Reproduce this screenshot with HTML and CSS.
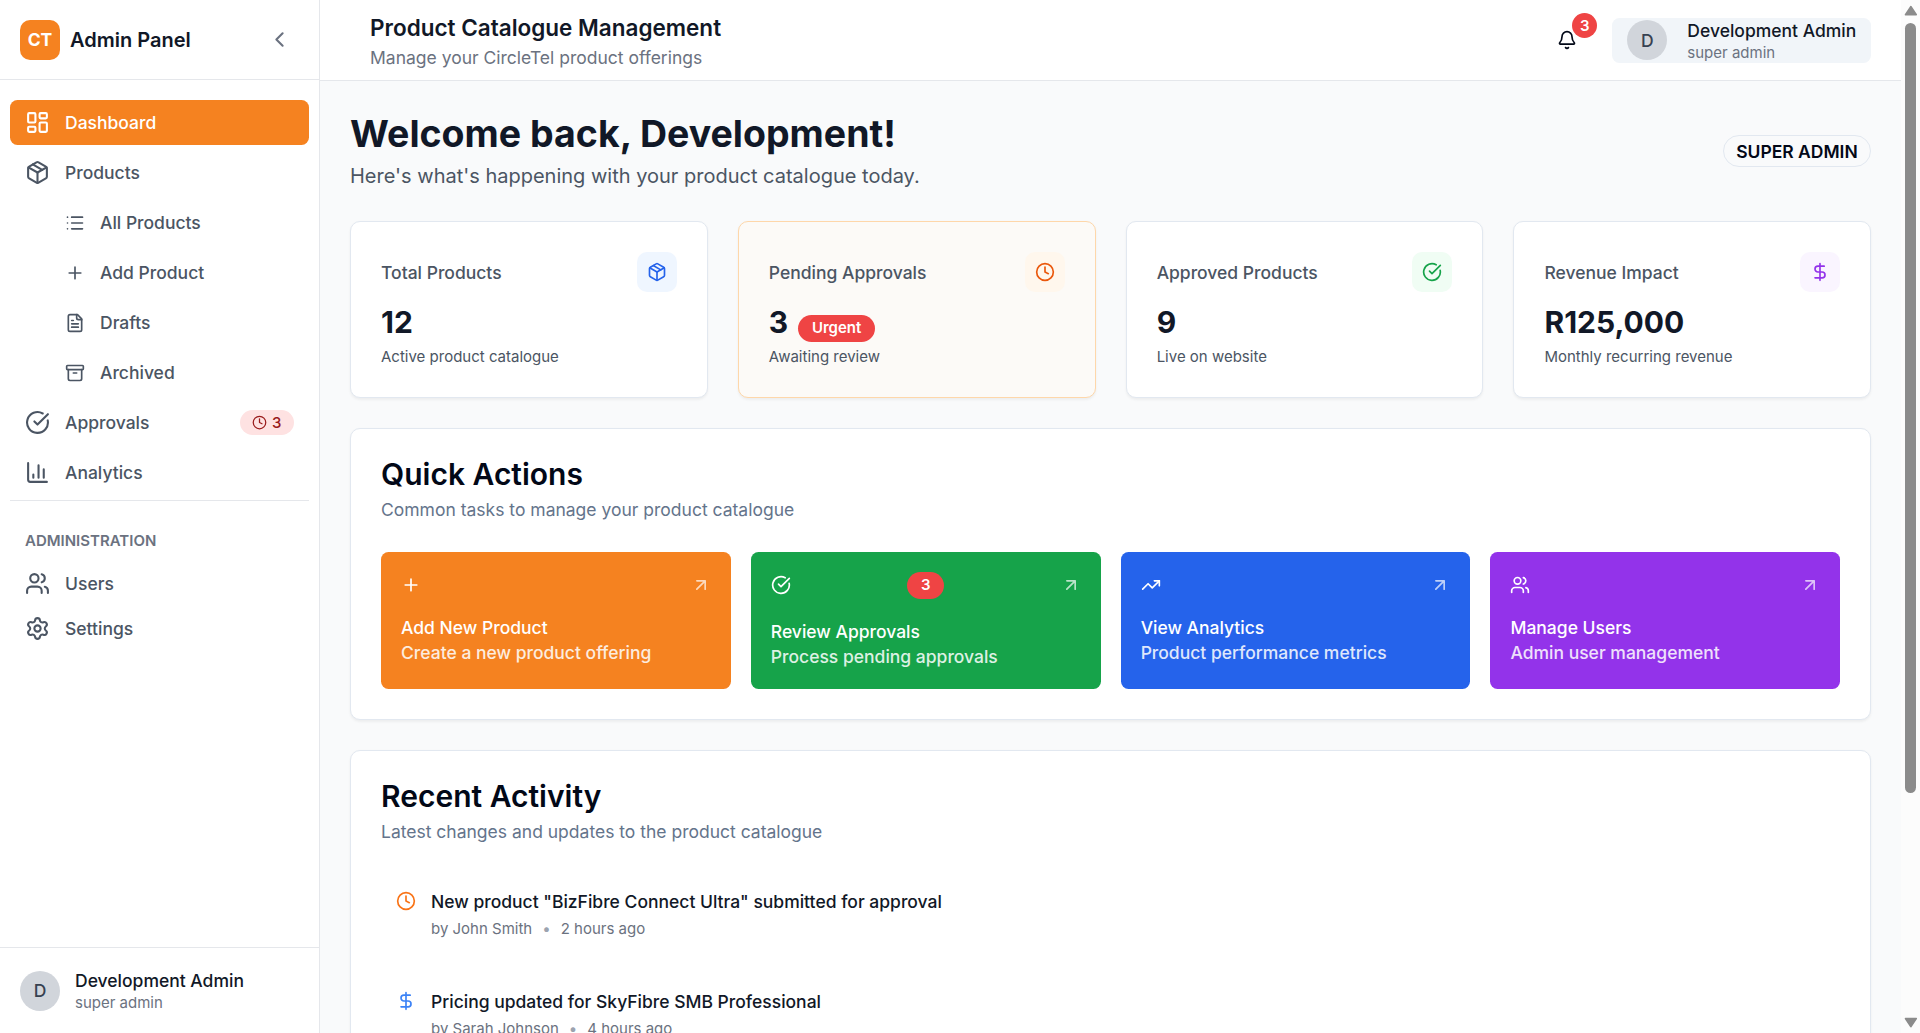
FILE: index.html
```html
<!DOCTYPE html>
<html lang="en">
<head>
<meta charset="utf-8">
<meta name="viewport" content="width=device-width, initial-scale=1">
<title>Product Catalogue Management</title>
<link rel="stylesheet" href="styles.css">
</head>
<body>
<svg class="sprite" aria-hidden="true">
  <symbol id="i-dashboard" viewBox="0 0 24 24"><rect x="3" y="3" width="7" height="9" rx="1"/><rect x="14" y="3" width="7" height="5" rx="1"/><rect x="14" y="12" width="7" height="9" rx="1"/><rect x="3" y="16" width="7" height="5" rx="1"/></symbol>
  <symbol id="i-package" viewBox="0 0 24 24"><path d="M11 21.73a2 2 0 0 0 2 0l7-4A2 2 0 0 0 21 16V8a2 2 0 0 0-1-1.73l-7-4a2 2 0 0 0-2 0l-7 4A2 2 0 0 0 3 8v8a2 2 0 0 0 1 1.73z"/><path d="M12 22V12"/><path d="M3.29 7 12 12l8.71-5"/><path d="m7.5 4.27 9 5.15"/></symbol>
  <symbol id="i-list" viewBox="0 0 24 24"><path d="M3 5h.01M3 12h.01M3 19h.01M8 5h13M8 12h13M8 19h13"/></symbol>
  <symbol id="i-plus" viewBox="0 0 24 24"><path d="M5 12h14M12 5v14"/></symbol>
  <symbol id="i-file" viewBox="0 0 24 24"><path d="M15 2H6a2 2 0 0 0-2 2v16a2 2 0 0 0 2 2h12a2 2 0 0 0 2-2V7z"/><path d="M14 2v4a2 2 0 0 0 2 2h4"/><path d="M10 9H8M16 13H8M16 17H8"/></symbol>
  <symbol id="i-archive" viewBox="0 0 24 24"><rect x="2" y="3" width="20" height="5" rx="1"/><path d="M4 8v11a2 2 0 0 0 2 2h12a2 2 0 0 0 2-2V8"/><path d="M10 12h4"/></symbol>
  <symbol id="i-check" viewBox="0 0 24 24"><path d="M21.801 10A10 10 0 1 1 17 3.335"/><path d="m9 11 3 3L22 4"/></symbol>
  <symbol id="i-chart" viewBox="0 0 24 24"><path d="M3 3v16a2 2 0 0 0 2 2h16"/><path d="M18 17V9M13 17V5M8 17v-3"/></symbol>
  <symbol id="i-users" viewBox="0 0 24 24"><path d="M16 21v-2a4 4 0 0 0-4-4H6a4 4 0 0 0-4 4v2"/><path d="M16 3.128a4 4 0 0 1 0 7.744"/><path d="M22 21v-2a4 4 0 0 0-3-3.87"/><circle cx="9" cy="7" r="4"/></symbol>
  <symbol id="i-settings" viewBox="0 0 24 24"><path d="M9.671 4.136a2.34 2.34 0 0 1 4.659 0 2.34 2.34 0 0 0 3.319 1.915 2.34 2.34 0 0 1 2.33 4.033 2.34 2.34 0 0 0 0 3.831 2.34 2.34 0 0 1-2.33 4.033 2.34 2.34 0 0 0-3.319 1.915 2.34 2.34 0 0 1-4.659 0 2.34 2.34 0 0 0-3.32-1.915 2.34 2.34 0 0 1-2.33-4.033 2.34 2.34 0 0 0 0-3.831A2.34 2.34 0 0 1 6.35 6.051a2.34 2.34 0 0 0 3.319-1.915"/><circle cx="12" cy="12" r="3"/></symbol>
  <symbol id="i-chevron" viewBox="0 0 24 24"><path d="m15 18-6-6 6-6"/></symbol>
  <symbol id="i-clock" viewBox="0 0 24 24"><circle cx="12" cy="12" r="10"/><path d="M12 6v6l4 2"/></symbol>
  <symbol id="i-bell" viewBox="0 0 24 24"><path d="M10.268 21a2 2 0 0 0 3.464 0"/><path d="M3.262 15.326A1 1 0 0 0 4 17h16a1 1 0 0 0 .74-1.673C19.41 13.956 18 12.499 18 8A6 6 0 0 0 6 8c0 4.499-1.411 5.956-2.738 7.326"/></symbol>
  <symbol id="i-dollar" viewBox="0 0 24 24"><path d="M12 2v20"/><path d="M17 5H9.5a3.5 3.5 0 0 0 0 7h5a3.5 3.5 0 0 1 0 7H6"/></symbol>
  <symbol id="i-trend" viewBox="0 0 24 24"><path d="M16 7h6v6"/><path d="m22 7-8.5 8.5-5-5L2 17"/></symbol>
  <symbol id="i-arrow" viewBox="0 0 24 24"><path d="M7 7h10v10M7 17 17 7"/></symbol>
</svg>

<aside class="sidebar">
  <div class="brand">
    <span class="brand-mark">CT</span>
    <span class="brand-name">Admin Panel</span>
    <button class="collapse" type="button" aria-label="Collapse sidebar"><svg class="icon icon-lg"><use href="#i-chevron"/></svg></button>
  </div>
  <nav class="nav" aria-label="Main">
    <a class="nav-item active" href="#" aria-current="page"><svg class="icon icon-lg"><use href="#i-dashboard"/></svg>Dashboard</a>
    <a class="nav-item" href="#"><svg class="icon icon-lg"><use href="#i-package"/></svg>Products</a>
    <a class="nav-item sub" href="#"><svg class="icon"><use href="#i-list"/></svg>All Products</a>
    <a class="nav-item sub" href="#"><svg class="icon"><use href="#i-plus"/></svg>Add Product</a>
    <a class="nav-item sub" href="#"><svg class="icon"><use href="#i-file"/></svg>Drafts</a>
    <a class="nav-item sub" href="#"><svg class="icon"><use href="#i-archive"/></svg>Archived</a>
    <a class="nav-item" href="#"><svg class="icon icon-lg"><use href="#i-check"/></svg>Approvals
      <span class="nav-badge"><svg class="icon icon-sm"><use href="#i-clock"/></svg>3</span></a>
    <a class="nav-item" href="#"><svg class="icon icon-lg"><use href="#i-chart"/></svg>Analytics</a>
    <div class="nav-group">
      <h2 class="nav-label">ADMINISTRATION</h2>
      <a class="nav-item" href="#"><svg class="icon icon-lg"><use href="#i-users"/></svg>Users</a>
      <a class="nav-item" href="#"><svg class="icon icon-lg"><use href="#i-settings"/></svg>Settings</a>
    </div>
  </nav>
  <div class="account">
    <span class="avatar">D</span>
    <span class="person"><span class="person-name">Development Admin</span><span class="person-role">super admin</span></span>
  </div>
</aside>

<div class="page">
  <header class="topbar">
    <div class="topbar-title">
      <h1 class="page-title">Product Catalogue Management</h1>
      <p class="page-note">Manage your CircleTel product offerings</p>
    </div>
    <div class="topbar-actions">
      <button class="bell" type="button" aria-label="Notifications"><svg class="icon"><use href="#i-bell"/></svg><span class="bell-count">3</span></button>
      <button class="profile" type="button">
        <span class="avatar">D</span>
        <span class="person"><span class="person-name">Development Admin</span><span class="person-role">super admin</span></span>
      </button>
    </div>
  </header>

  <main class="content">
    <div class="welcome">
      <div class="welcome-text">
        <h2 class="welcome-title">Welcome back, Development!</h2>
        <p class="welcome-note">Here's what's happening with your product catalogue today.</p>
      </div>
      <span class="role-badge">SUPER ADMIN</span>
    </div>

    <section class="stats" aria-label="Statistics">
      <article class="card">
        <div class="stat-head"><h3 class="stat-title">Total Products</h3><span class="chip blue"><svg class="icon"><use href="#i-package"/></svg></span></div>
        <div class="stat-value">12</div>
        <p class="stat-note">Active product catalogue</p>
      </article>
      <article class="card urgent">
        <div class="stat-head"><h3 class="stat-title">Pending Approvals</h3><span class="chip orange"><svg class="icon"><use href="#i-clock"/></svg></span></div>
        <div class="stat-value">3<span class="badge">Urgent</span></div>
        <p class="stat-note">Awaiting review</p>
      </article>
      <article class="card">
        <div class="stat-head"><h3 class="stat-title">Approved Products</h3><span class="chip green"><svg class="icon"><use href="#i-check"/></svg></span></div>
        <div class="stat-value">9</div>
        <p class="stat-note">Live on website</p>
      </article>
      <article class="card">
        <div class="stat-head"><h3 class="stat-title">Revenue Impact</h3><span class="chip purple"><svg class="icon"><use href="#i-dollar"/></svg></span></div>
        <div class="stat-value">R125,000</div>
        <p class="stat-note">Monthly recurring revenue</p>
      </article>
    </section>

    <section class="card">
      <h2 class="card-title">Quick Actions</h2>
      <p class="card-note">Common tasks to manage your product catalogue</p>
      <div class="actions">
        <button class="action action-orange" type="button">
          <span class="action-top"><svg class="icon"><use href="#i-plus"/></svg><svg class="icon faded"><use href="#i-arrow"/></svg></span>
          <span class="action-text"><span>Add New Product</span><span class="action-note">Create a new product offering</span></span>
        </button>
        <button class="action action-green" type="button">
          <span class="action-top"><svg class="icon"><use href="#i-check"/></svg><span class="badge">3</span><svg class="icon faded"><use href="#i-arrow"/></svg></span>
          <span class="action-text"><span>Review Approvals</span><span class="action-note">Process pending approvals</span></span>
        </button>
        <button class="action action-blue" type="button">
          <span class="action-top"><svg class="icon"><use href="#i-trend"/></svg><svg class="icon faded"><use href="#i-arrow"/></svg></span>
          <span class="action-text"><span>View Analytics</span><span class="action-note">Product performance metrics</span></span>
        </button>
        <button class="action action-purple" type="button">
          <span class="action-top"><svg class="icon"><use href="#i-users"/></svg><svg class="icon faded"><use href="#i-arrow"/></svg></span>
          <span class="action-text"><span>Manage Users</span><span class="action-note">Admin user management</span></span>
        </button>
      </div>
    </section>

    <section class="card">
      <h2 class="card-title">Recent Activity</h2>
      <p class="card-note">Latest changes and updates to the product catalogue</p>
      <ul class="feed">
        <li class="feed-item">
          <svg class="icon tone-orange"><use href="#i-clock"/></svg>
          <div class="feed-text">
            <p class="feed-title">New product "BizFibre Connect Ultra" submitted for approval</p>
            <p class="feed-meta"><span>by John Smith</span><span class="dot">•</span><span>2 hours ago</span></p>
          </div>
        </li>
        <li class="feed-item">
          <svg class="icon tone-blue"><use href="#i-dollar"/></svg>
          <div class="feed-text">
            <p class="feed-title">Pricing updated for SkyFibre SMB Professional</p>
            <p class="feed-meta"><span>by Sarah Johnson</span><span class="dot">•</span><span>4 hours ago</span></p>
          </div>
        </li>
      </ul>
    </section>
  </main>
</div>

<div class="scrollbar" aria-hidden="true">
  <svg class="scroll-arrow" viewBox="0 0 10 8"><path d="M5 1 9 7H1z"/></svg>
  <div class="scroll-track"><div class="scroll-thumb"></div></div>
  <svg class="scroll-arrow" viewBox="0 0 10 8"><path d="M5 7 1 1h8z"/></svg>
</div>
</body>
</html>
```
FILE: styles.css
```css
*,
*::before,
*::after {
  box-sizing: border-box;
}

/* The interface is shown at 125% scale. */
html {
  height: 100%;
  zoom: 1.25;
}

body {
  display: flex;
  height: 100%;
  margin: 0;
  overflow: hidden;
  background: #f9fafb;
  color: #020817;
  font-family: Inter, "Liberation Sans", sans-serif;
  font-size: 14px;
  line-height: 20px;
}

h1, h2, h3, p, ul {
  margin: 0;
  padding: 0;
}

button {
  border: 0;
  margin: 0;
  padding: 0;
  background: none;
  color: inherit;
  font: inherit;
  text-align: left;
  cursor: pointer;
}

.sprite {
  position: absolute;
  width: 0;
  height: 0;
}

.icon {
  flex: none;
  display: block;
  width: 16px;
  height: 16px;
  fill: none;
  stroke: currentColor;
  stroke-width: 2;
  stroke-linecap: round;
  stroke-linejoin: round;
}

.icon-lg {
  width: 20px;
  height: 20px;
}

.icon-sm {
  width: 12px;
  height: 12px;
}

/* Sidebar */
.sidebar {
  flex: none;
  display: flex;
  flex-direction: column;
  width: 256px;
  border-right: 1px solid #e5e7eb;
  background: #fff;
}

.brand {
  display: flex;
  align-items: center;
  gap: 8px;
  height: 64px;
  padding: 0 16px;
  border-bottom: 1px solid #e5e7eb;
}

.brand-mark {
  display: grid;
  place-items: center;
  width: 32px;
  height: 32px;
  border-radius: 8px;
  background: #f58220;
  color: #fff;
  font-weight: 700;
}

.brand-name {
  flex: 1;
  color: #111827;
  font-size: 16px;
  line-height: 24px;
  font-weight: 600;
}

.collapse {
  padding: 6px;
  color: #6b7280;
}

.nav {
  flex: 1;
  display: flex;
  flex-direction: column;
  gap: 4px;
  padding: 16px 8px;
}

.nav-item {
  display: flex;
  align-items: center;
  gap: 12px;
  padding: 8px 12px;
  border-radius: 6px;
  color: #4b5563;
  font-weight: 500;
  text-decoration: none;
}

.nav-item.active {
  background: #f58220;
  color: #fff;
}

.nav-item.sub {
  margin-left: 32px;
}

.nav-badge {
  display: flex;
  align-items: center;
  gap: 4px;
  margin-left: auto;
  padding: 2px 10px;
  border-radius: 10px;
  background: #fee2e2;
  color: #991b1b;
  font-size: 12px;
  line-height: 16px;
}

.nav-group {
  padding-top: 24px;
  border-top: 1px solid #e5e7eb;
}

.nav-label {
  padding: 0 12px 8px;
  color: #6b7280;
  font-size: 12px;
  line-height: 16px;
  font-weight: 600;
}

.account {
  display: flex;
  align-items: center;
  gap: 12px;
  padding: 16px;
  border-top: 1px solid #e5e7eb;
}

.avatar {
  flex: none;
  display: grid;
  place-items: center;
  width: 32px;
  height: 32px;
  border-radius: 50%;
  background: #d1d5db;
  color: #374151;
  font-weight: 500;
}

.person {
  display: flex;
  flex-direction: column;
}

.person-name {
  color: #111827;
  font-weight: 500;
}

.person-role {
  color: #6b7280;
  font-size: 12px;
  line-height: 16px;
}

/* Top bar */
.page {
  flex: 1;
  min-width: 0;
  display: flex;
  flex-direction: column;
}

.topbar {
  flex: none;
  display: flex;
  align-items: center;
  justify-content: space-between;
  padding: 8px 24px 8px 40px;
  border-bottom: 1px solid #e5e7eb;
  background: #fff;
}

.page-title {
  color: #111827;
  font-size: 18px;
  line-height: 28px;
  font-weight: 600;
}

.page-note {
  color: #6b7280;
}

.topbar-actions {
  display: flex;
  align-items: center;
  gap: 16px;
}

.bell {
  position: relative;
  padding: 10px 12px;
}

.bell-count {
  position: absolute;
  top: -4px;
  right: -4px;
  width: 20px;
  height: 20px;
  border-radius: 50%;
  background: #ef4444;
  color: #fff;
  font-size: 12px;
  line-height: 20px;
  font-weight: 600;
  text-align: center;
}

.profile {
  display: flex;
  align-items: center;
  gap: 16px;
  padding: 0 12px;
  border-radius: 6px;
  background: #f1f5f9;
}

/* Content */
.content {
  display: flex;
  flex-direction: column;
  gap: 24px;
  padding: 24px;
}

.welcome {
  display: flex;
  align-items: center;
  justify-content: space-between;
}

.welcome-title {
  color: #111827;
  font-size: 30px;
  line-height: 36px;
  font-weight: 700;
}

.welcome-note {
  margin-top: 4px;
  color: #4b5563;
  font-size: 16px;
  line-height: 24px;
}

.role-badge {
  padding: 2px 10px;
  border: 1px solid #e2e8f0;
  border-radius: 13px;
  font-weight: 600;
}

.card {
  padding: 24px;
  border: 1px solid #e2e8f0;
  border-radius: 8px;
  background: #fff;
  box-shadow: 0 1px 2px rgba(0, 0, 0, 0.05);
}

.card.urgent {
  border-color: #fed7aa;
  background: #fcfaf7;
}

.stats {
  display: grid;
  grid-template-columns: repeat(4, 1fr);
  gap: 24px;
}

.stat-head {
  display: flex;
  align-items: center;
  justify-content: space-between;
  margin-bottom: 8px;
}

.stat-title {
  color: #4b5563;
  font-size: 14px;
  font-weight: 500;
}

.chip {
  padding: 8px;
  border-radius: 8px;
}

.chip.blue { background: #eff6ff; color: #2563eb; }
.chip.orange { background: #fff7ed; color: #ea580c; }
.chip.green { background: #f0fdf4; color: #16a34a; }
.chip.purple { background: #faf5ff; color: #9333ea; }

.stat-value {
  display: flex;
  align-items: flex-end;
  gap: 8px;
  color: #111827;
  font-size: 24px;
  line-height: 32px;
  font-weight: 700;
}

.stat-note {
  margin-top: 4px;
  color: #4b5563;
  font-size: 12px;
  line-height: 16px;
}

.badge {
  padding: 3px 11px;
  border-radius: 11px;
  background: #ef4444;
  color: #fff;
  font-size: 12px;
  line-height: 16px;
  font-weight: 600;
}

.card-title {
  font-size: 24px;
  line-height: 24px;
  font-weight: 600;
}

.card-note {
  margin: 6px 0 24px;
  color: #64748b;
}

/* Quick actions */
.actions {
  display: grid;
  grid-template-columns: repeat(4, 1fr);
  gap: 16px;
}

.action {
  display: flex;
  flex-direction: column;
  justify-content: center;
  gap: 16px;
  padding: 16px;
  border-radius: 6px;
  color: #fff;
  font-weight: 500;
}

.action-orange { background: #f58220; }
.action-green { background: #16a34a; }
.action-blue { background: #2563eb; }
.action-purple { background: #9333ea; }

.action-top {
  display: flex;
  align-items: center;
  justify-content: space-between;
}

.action-text {
  display: flex;
  flex-direction: column;
}

.action-note {
  opacity: 0.85;
}

.faded {
  opacity: 0.7;
}

/* Activity feed */
.feed {
  display: flex;
  flex-direction: column;
  gap: 16px;
  list-style: none;
}

.feed-item {
  display: flex;
  align-items: flex-start;
  gap: 12px;
  padding: 12px;
}

.feed-item .icon {
  margin-top: 2px;
}

.tone-orange { color: #f97316; }
.tone-blue { color: #3b82f6; }

.feed-title {
  color: #111827;
  font-weight: 500;
}

.feed-meta {
  display: flex;
  gap: 8px;
  margin-top: 4px;
  color: #6b7280;
  font-size: 12px;
  line-height: 16px;
}

.dot {
  color: #9ca3af;
}

/* Scroll bar */
.scrollbar {
  flex: none;
  display: flex;
  flex-direction: column;
  align-items: center;
  gap: 5px;
  width: 15px;
  padding: 4px 0;
  background: #fcfcfc;
}

.scroll-arrow {
  flex: none;
  width: 11px;
  height: 9px;
  fill: #8b8b8b;
  stroke: #8b8b8b;
  stroke-linejoin: round;
}

.scroll-track {
  flex: 1;
  width: 9px;
}

.scroll-thumb {
  height: 78%;
  border-radius: 5px;
  background: #8b8b8b;
}
```
